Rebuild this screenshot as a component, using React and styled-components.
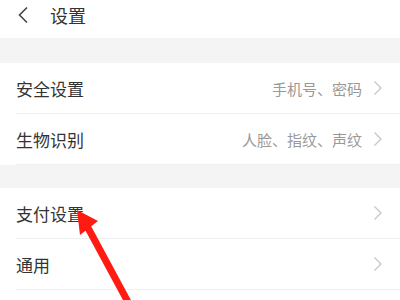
import React from 'react';
import styled, { createGlobalStyle } from 'styled-components';

const GlobalStyle = createGlobalStyle`
  html, body {
    margin: 0;
    padding: 0;
    background: #ffffff;
  }
  body {
    font-family: "Noto Sans CJK SC", "Liberation Sans", sans-serif;
    color: #333333;
  }
`;

const groups = [
  [
    { title: '安全设置', hint: '手机号、密码' },
    { title: '生物识别', hint: '人脸、指纹、声纹' },
  ],
  [
    { title: '支付设置', hint: '' },
    { title: '通用', hint: '' },
  ],
];

function App() {
  return (
    <>
      <GlobalStyle />
      <Page>
        <Header>
          <BackButton>
            <svg width="14" height="18" viewBox="0 0 14 18">
              <path d="M11 1.5 L3.5 9 L11 16.5" fill="none" stroke="#444" strokeWidth="1.6" />
            </svg>
          </BackButton>
          <Title>设置</Title>
        </Header>
        {groups.map((group, gi) => (
          <React.Fragment key={gi}>
            <Gap $first={gi === 0} />
            <Group>
              {group.map((item) => (
                <Row key={item.title}>
                  <RowTitle>{item.title}</RowTitle>
                  <RowRight>
                    {item.hint && <Hint>{item.hint}</Hint>}
                    <svg width="12" height="16" viewBox="0 0 12 16">
                      <path d="M2.5 1.5 L9 8 L2.5 14.5" fill="none" stroke="#c8c8c8" strokeWidth="1.4" />
                    </svg>
                  </RowRight>
                </Row>
              ))}
            </Group>
          </React.Fragment>
        ))}
        <Arrow width="400" height="300" viewBox="0 0 400 300">
          <path d="M87 226 L128 302" stroke="#ff1a12" strokeWidth="7" fill="none" />
          <polygon points="77,210 98,221 80,235" fill="#ff1a12" />
        </Arrow>
      </Page>
    </>
  );
}

const Page = styled.div`
  position: relative;
  width: 400px;
  height: 300px;
  overflow: hidden;
  background: #ffffff;
`;

const Header = styled.div`
  display: flex;
  align-items: center;
  height: 30px;
  padding: 0 0 8px 16px;
`;

const BackButton = styled.div`
  display: flex;
  align-items: center;
  width: 34px;
`;

const Title = styled.span`
  font-size: 18px;
  color: #333333;
  line-height: 1;
`;

const Gap = styled.div`
  height: ${({ $first }) => ($first ? '25px' : '23px')};
  background: #f4f4f4;
`;

const Group = styled.div`
  padding-left: 16px;
`;

const Row = styled.div`
  display: flex;
  align-items: center;
  justify-content: space-between;
  height: 50px;
  padding-right: 16px;
  border-bottom: 1px solid #f0f0f0;
`;

const RowTitle = styled.span`
  font-size: 17px;
  color: #333333;
`;

const RowRight = styled.div`
  display: flex;
  align-items: center;
  gap: 10px;
`;

const Hint = styled.span`
  font-size: 15px;
  color: #999999;
`;

const Arrow = styled.svg`
  position: absolute;
  left: 0;
  top: 0;
  pointer-events: none;
`;

export default App;
